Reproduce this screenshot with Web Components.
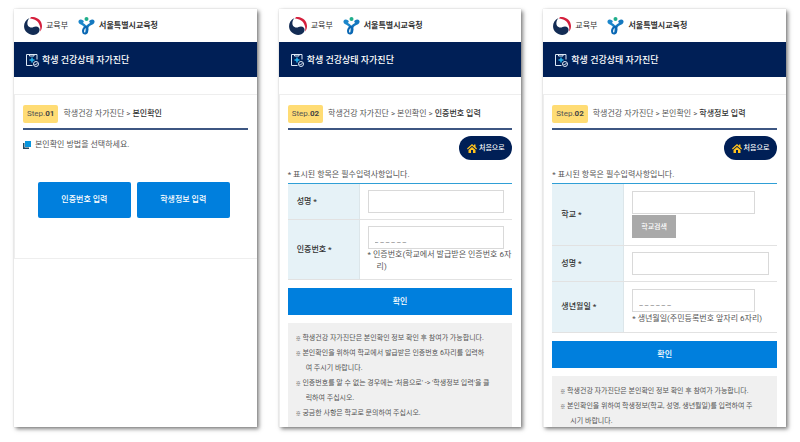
<!DOCTYPE html>
<html lang="ko">
<head>
<meta charset="UTF-8">
<meta name="viewport" content="width=device-width, initial-scale=1">
<title>학생 건강상태 자가진단</title>
<style>
  body {
    margin: 0;
    padding: 9px 14px 15px;
    box-sizing: border-box;
    min-height: 100vh;
    display: grid;
    grid-template-columns: repeat(3, 1fr);
    gap: 22px;
    background: #fff;
    color: #555;
    font-family: Roboto, "Noto Sans CJK KR", sans-serif;
    font-size: 8px;
    line-height: 12px;
  }
  b {
    color: #333;
    font-weight: 500;
  }
</style>
</head>
<body>
  <phone-screen>
    <step-panel step="01" class="framed">
      <span slot="path">학생건강 자가진단 &gt; <b>본인확인</b></span>
      <method-picker>본인확인 방법을 선택하세요.</method-picker>
    </step-panel>
  </phone-screen>

  <phone-screen>
    <step-panel step="02">
      <span slot="path">학생건강 자가진단 &gt; 본인확인 &gt; <b>인증번호 입력</b></span>
      <check-form>
        <field-row label="성명"></field-row>
        <field-row label="인증번호" placeholder="_ _ _ _ _ _">
          <span slot="hint">* 인증번호(학교에서 발급받은 인증번호 6자<br>리)</span>
        </field-row>
        <note-list slot="notes">
          <note-item>학생건강 자가진단은 본인확인 정보 확인 후 참여가 가능합니다.</note-item>
          <note-item>본인확인을 위하여 학교에서 발급받은 인증번호 6자리를 입력하<br>여 주시기 바랍니다.</note-item>
          <note-item>인증번호를 알 수 없는 경우에는 '처음으로' -&gt; '학생정보 입력'을 클<br>릭하여 주십시오.</note-item>
          <note-item>궁금한 사항은 학교로 문의하여 주십시오.</note-item>
        </note-list>
      </check-form>
    </step-panel>
  </phone-screen>

  <phone-screen>
    <step-panel step="02">
      <span slot="path">학생건강 자가진단 &gt; 본인확인 &gt; <b>학생정보 입력</b></span>
      <check-form>
        <field-row label="학교" short action="학교검색"></field-row>
        <field-row label="성명"></field-row>
        <field-row label="생년월일" short placeholder="_ _ _ _ _ _">
          <span slot="hint">* 생년월일(주민등록번호 앞자리 6자리)</span>
        </field-row>
        <note-list slot="notes">
          <note-item>학생건강 자가진단은 본인확인 정보 확인 후 참여가 가능합니다.</note-item>
          <note-item>본인확인을 위하여 학생정보(학교, 성명, 생년월일)를 입력하여 주<br>시기 바랍니다.</note-item>
        </note-list>
      </check-form>
    </step-panel>
  </phone-screen>

<script>
class PhoneScreen extends HTMLElement {
  constructor() {
    super();
    this.attachShadow({ mode: 'open' });
    this.shadowRoot.innerHTML = `
      <style>
        :host {
          display: block;
          height: calc(100vh - 24px);
          min-width: 0;
          overflow: hidden;
          background: #fff;
          box-shadow: 2px 2px 4px rgba(0, 0, 0, 0.5), 0 0 1px rgba(0, 0, 0, 0.2);
        }
      </style>
      <agency-header></agency-header>
      <title-bar>학생 건강상태 자가진단</title-bar>
      <slot></slot>`;
  }
}

class AgencyHeader extends HTMLElement {
  constructor() {
    super();
    this.attachShadow({ mode: 'open' });
    this.shadowRoot.innerHTML = `
      <style>
        :host {
          display: flex;
          align-items: center;
          height: 33px;
          padding: 0 10px;
          color: #333;
          white-space: nowrap;
        }
        .moe { margin: 0 10px 0 4px; }
        .sen { margin-left: 4px; font-weight: 700; }
        svg { flex: none; }
      </style>
      <svg width="18" height="18" viewBox="0 0 36 36" aria-hidden="true">
        <path fill="#d51f3c" d="M14 0C26-1 36 7 36 18c0 4-1 8-4 11 1-5 1-9-1-13C28 8 22 4 12 3z"/>
        <path fill="#132c54" d="M11 2C-2 8-3 24 6 31c8 7 19 6 24-1 3-6 0-11-6-11-5 0-6 3-11 2C5 19 5 9 11 2z"/>
      </svg>
      <span class="moe">교육부</span>
      <svg width="17" height="18" viewBox="0 0 34 36" fill="none" stroke-linecap="round" stroke-linejoin="round" aria-hidden="true">
        <circle cx="17" cy="4" r="4" fill="#20ae8a"/>
        <path stroke="#1b86cb" stroke-width="5" d="M9 9C5 6 2 8 4 11c2 3 8 2 11 9"/>
        <path stroke="#1478bf" stroke-width="5" d="M25 9c4-3 7-1 5 2-2 3-8 3-11 8-2 4-1 8-2 12"/>
        <path stroke="#0a67b3" stroke-width="4" d="M16 19c-5 3-7 8-5 13 4 3 8-1 8-7 0-3-1-5-3-6z"/>
      </svg>
      <span class="sen">서울특별시교육청</span>`;
  }
}

class TitleBar extends HTMLElement {
  constructor() {
    super();
    this.attachShadow({ mode: 'open' });
    this.shadowRoot.innerHTML = `
      <style>
        :host {
          display: flex;
          align-items: center;
          gap: 3px;
          height: 35px;
          padding: 0 12px;
          background: #001f56;
          color: #fff;
        }
        h1 {
          margin: 0;
          font-size: 9px;
          font-weight: 500;
          white-space: nowrap;
        }
      </style>
      <svg width="13" height="14" viewBox="0 0 26 28" fill="none" stroke="#dce8f5" stroke-width="2" aria-hidden="true">
        <path d="M22 13V3H1v22h12M7 3v3h9V3"/>
        <path stroke="#23b5ee" stroke-width="3" d="M12 9v10M7 14h10"/>
        <circle cx="20" cy="22" r="5"/>
        <path d="M17 22l2 2 4-4"/>
      </svg>
      <h1><slot></slot></h1>`;
  }
}

class StepPanel extends HTMLElement {
  constructor() {
    super();
    this.attachShadow({ mode: 'open' });
    this.shadowRoot.innerHTML = `
      <style>
        :host {
          display: block;
          margin-top: 17px;
          padding: 10px 9px 0 8px;
          border: 1px solid #eee;
          border-width: 1px 0 0 1px;
        }
        :host(.framed) { border-bottom-width: 1px; }
        header {
          display: flex;
          align-items: center;
          gap: 5px;
          padding-bottom: 5px;
          border-bottom: 2px solid #3d5682;
          white-space: nowrap;
        }
        .badge {
          padding: 3px 4px;
          border-radius: 2px;
          background: #ffdc74;
        }
        .badge b { color: #444; font-weight: 700; }
      </style>
      <header>
        <span class="badge">Step.<b>${this.getAttribute('step')}</b></span>
        <slot name="path"></slot>
      </header>
      <slot></slot>`;
  }
}

class MethodPicker extends HTMLElement {
  constructor() {
    super();
    this.attachShadow({ mode: 'open' });
    this.shadowRoot.innerHTML = `
      <style>
        :host { display: block; }
        p {
          display: flex;
          align-items: center;
          gap: 4px;
          margin: 9px 0 31px;
        }
        .buttons {
          display: flex;
          gap: 6px;
          padding: 0 18px 40px 15px;
        }
        button {
          flex: 1;
          height: 36px;
          padding: 0;
          border: 0;
          border-radius: 2px;
          background: #007fdd;
          color: #fff;
          font: inherit;
          font-weight: 500;
        }
      </style>
      <p>
        <svg width="8" height="8" viewBox="0 0 16 16" aria-hidden="true">
          <path fill="#244861" d="M0 4h3v9h9v3H0z"/>
          <path fill="#0795dd" d="M4 0h12v12H4z"/>
        </svg>
        <slot></slot>
      </p>
      <div class="buttons">
        <button type="button">인증번호 입력</button>
        <button type="button">학생정보 입력</button>
      </div>`;
  }
}

class CheckForm extends HTMLElement {
  constructor() {
    super();
    this.attachShadow({ mode: 'open' });
    this.shadowRoot.innerHTML = `
      <style>
        :host { display: block; }
        form { display: flow-root; }
        .home {
          display: flex;
          align-items: center;
          justify-content: center;
          gap: 2px;
          width: 53px;
          height: 24px;
          margin: 6px 0 9px auto;
          border-radius: 12px;
          background: #001f56;
          color: #fff;
          font-size: 7px;
          font-weight: 500;
          text-decoration: none;
          white-space: nowrap;
        }
        p { margin: 0 0 2px; }
        .fields { border-top: 1px solid #2f9fd6; }
        .submit {
          display: block;
          width: 100%;
          height: 27px;
          margin: 8px 0;
          padding: 0;
          border: 0;
          background: #007fdd;
          color: #fff;
          font: inherit;
          font-weight: 500;
        }
      </style>
      <form>
        <a class="home" href="#">
          <svg width="10" height="9" viewBox="0 0 20 18" fill="#ffc21c" aria-hidden="true">
            <path d="M10 0L0 9l1.500 2L10 3.500l8.500 7.500L20 9l-3-3V1h-3v2.500z"/>
            <path d="M10 6l-7 6v6h5v-6h4v6h5v-6z"/>
          </svg>
          처음으로
        </a>
        <p>* 표시된 항목은 필수입력사항입니다.</p>
        <div class="fields"><slot></slot></div>
        <button class="submit" type="button">확인</button>
        <slot name="notes"></slot>
      </form>`;
  }
}

class FieldRow extends HTMLElement {
  constructor() {
    super();
    this.attachShadow({ mode: 'open' });
    this.render();
  }

  render() {
    const action = this.getAttribute('action');
    const placeholder = this.getAttribute('placeholder') || '';

    this.shadowRoot.innerHTML = `
      <style>
        :host {
          display: grid;
          grid-template-columns: 32% 1fr;
          border-bottom: 1px solid #e2e2e2;
        }
        label {
          display: flex;
          align-items: center;
          padding-left: 9px;
          background: #e6f2f7;
          border-right: 1px solid #dce6ea;
          color: #333;
          font-weight: 500;
        }
        .cell {
          display: flex;
          flex-direction: column;
          align-items: flex-start;
          min-width: 0;
          padding: 6px 8px;
        }
        :host([short]) .cell {
          gap: 1px;
          padding: 7px 8px;
        }
        input {
          box-sizing: border-box;
          width: 100%;
          height: 23px;
          padding: 3px 6px 0;
          border: 1px solid #d9d9d9;
          border-radius: 0;
          background: #fff;
          color: #333;
          font: inherit;
        }
        :host([short]) input { width: 90%; }
        input::placeholder { color: #777; opacity: 1; }
        button {
          height: 23px;
          padding: 0 9px;
          border: 0;
          background: #a9a9a9;
          color: #fff;
          font: inherit;
          font-size: 7px;
          font-weight: 500;
        }
        ::slotted([slot="hint"]) {
          display: block;
          padding-left: 9px;
          text-indent: -9px;
          white-space: nowrap;
        }
      </style>
      <label for="field">${this.getAttribute('label')} *</label>
      <div class="cell">
        <input id="field" type="text" placeholder="${placeholder}">
        ${action ? `<button type="button">${action}</button>` : ''}
        <slot name="hint"></slot>
      </div>`;
  }
}

class NoteList extends HTMLElement {
  constructor() {
    super();
    this.attachShadow({ mode: 'open' });
    this.shadowRoot.innerHTML = `
      <style>
        :host {
          display: block;
          padding: 8px;
          background: #f0f0f0;
          font-size: 7px;
          line-height: 15px;
        }
      </style>
      <slot></slot>`;
  }
}

class NoteItem extends HTMLElement {
  constructor() {
    super();
    this.attachShadow({ mode: 'open' });
    this.shadowRoot.innerHTML = `
      <style>
        :host {
          display: block;
          padding-left: 10px;
          text-indent: -10px;
          white-space: nowrap;
        }
        .mark {
          color: #333;
          font-size: 5px;
          font-weight: 700;
          line-height: 1;
        }
      </style>
      <span class="mark">※</span>
      <slot></slot>`;
  }
}

customElements.define('phone-screen', PhoneScreen);
customElements.define('agency-header', AgencyHeader);
customElements.define('title-bar', TitleBar);
customElements.define('step-panel', StepPanel);
customElements.define('method-picker', MethodPicker);
customElements.define('check-form', CheckForm);
customElements.define('field-row', FieldRow);
customElements.define('note-list', NoteList);
customElements.define('note-item', NoteItem);
</script>
</body>
</html>
